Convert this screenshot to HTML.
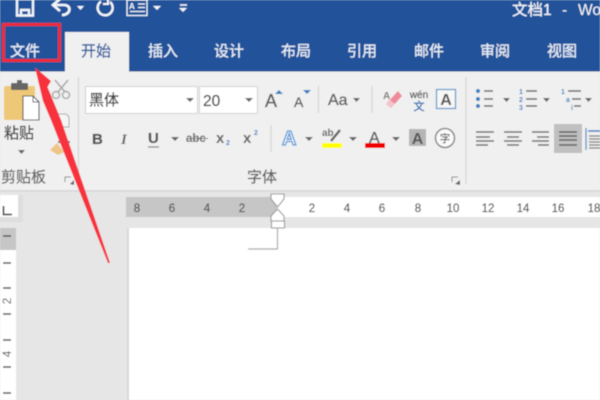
<!DOCTYPE html>
<html><head><meta charset="utf-8"><style>
html,body{margin:0;padding:0;width:600px;height:400px;overflow:hidden;background:#e6e6e6}
svg{display:block}
text{font-family:"Liberation Sans","Noto Sans CJK SC",sans-serif}
.tab{font-size:15px;fill:#e8eef7;stroke:#e8eef7;stroke-width:.25;text-anchor:middle}
.r{font-size:11.5px;fill:#555;stroke:#555;stroke-width:.2;text-anchor:middle}
.g{fill:#606060;stroke:#606060;stroke-width:.35}
.tri{fill:#666}
</style></head><body>
<svg width="600" height="400" viewBox="0 0 600 400" xmlns="http://www.w3.org/2000/svg">
<defs><filter id="b" x="-5%" y="-5%" width="110%" height="110%"><feGaussianBlur stdDeviation="0.45"/></filter></defs>
<g filter="url(#b)">
<rect width="600" height="400" fill="#e6e6e6"/>
<rect width="600" height="71.500" fill="#22539a"/>
<rect x="0" y="72" width="600" height="118" fill="#f0f0f0"/>
<rect x="0" y="190" width="600" height="2" fill="#d9d9d9"/>
<rect x="65" y="32" width="64" height="41" fill="#f0f0f0"/>

<!-- QAT -->
<g fill="none" stroke="#f2f5fa" stroke-width="2.400">
<path d="M17 -1H33V15.500H17Z"/><path d="M21 15V10H29V15"/>
<path d="M54 5H64C72 5 71 15 62 15" stroke-width="2.600"/>
<path d="M60 -1L53 5L60 11" stroke-width="2.600"/>
<path d="M101 1.500A7.500 7.500 0 1 0 110 2" stroke-width="2.400"/>
<path d="M108 -2V4H103" stroke-width="2"/>
<rect x="127" y="0" width="20" height="15.500" stroke-width="1.300"/>
<path d="M138 4H145M138 7.500H145M130 11.500H145" stroke-width="1.300"/>
<path d="M180 5H187" stroke-width="1.600"/>
</g>
<text x="129" y="9" font-size="8" font-weight="bold" fill="#f2f5fa">A</text>
<path d="M77 6H84L80.500 10ZM153 6H161L157 10ZM179 8H187L183 12Z" fill="#f2f5fa"/>
<text x="512" y="15" font-size="15.500" fill="#f2f5fa" stroke="#f2f5fa" stroke-width=".2">文档1</text>
<text x="562" y="15" font-size="15.500" fill="#f2f5fa">-</text>
<text x="578" y="15" font-size="15.500" fill="#f2f5fa">Wo</text>

<!-- tabs -->
<text class="tab" x="25" y="56">文件</text>
<text class="tab" x="96" y="56" style="fill:#2b5a9e;stroke:#2b5a9e">开始</text>
<text class="tab" x="163" y="56">插入</text>
<text class="tab" x="229" y="56">设计</text>
<text class="tab" x="296" y="56">布局</text>
<text class="tab" x="362" y="56">引用</text>
<text class="tab" x="429" y="56">邮件</text>
<text class="tab" x="495" y="56">审阅</text>
<text class="tab" x="562" y="56">视图</text>

<!-- separators -->
<path d="M78.500 77V184M466 77V184" stroke="#d4d4d4" stroke-width="1.200"/>
<path d="M271 125V152M318.500 86V113M372 86V113" stroke="#d4d4d4" stroke-width="1.200"/>

<!-- clipboard -->
<rect x="4" y="86" width="31" height="34" rx="2" fill="#efc877"/>
<rect x="11" y="83" width="17" height="7" rx="1" fill="#666"/>
<rect x="17" y="80" width="5" height="5" fill="#666"/>
<path d="M23 96H33L39 102V120H23Z" fill="#fff" stroke="#555" stroke-width="1.100"/>
<path d="M33 96V102H39" fill="none" stroke="#555"/>
<text x="4" y="138" font-size="15" fill="#444" stroke="#444" stroke-width=".25">粘贴</text>
<path d="M18 150H25L21.500 154Z" class="tri"/>
<text x="1" y="182" font-size="15" class="g" style="stroke-width:.2">剪贴板</text>
<path d="M65 182V177H71" fill="none" stroke="#888"/>
<path d="M70 184L74 180V185Z" fill="#666"/>
<!-- scissors -->
<path d="M55 80L65 92M68 80L58 92" stroke="#aaa" stroke-width="1.600" fill="none"/>
<circle cx="56" cy="95" r="3.500" fill="none" stroke="#aaa" stroke-width="1.500"/>
<circle cx="66" cy="95" r="3.500" fill="none" stroke="#aaa" stroke-width="1.500"/>
<path d="M58 114H66L69 117V127H58Z" fill="#f5f5f5" stroke="#aaa"/>
<path d="M50 150L57 143L64 152L58 155Z" fill="#eec585"/>
<path d="M58 141H70V143H58Z" fill="#777"/>

<!-- combos -->
<rect x="85.500" y="86.500" width="112" height="27" fill="#fff" stroke="#d2d2d2"/>
<text x="89" y="105" font-size="15" fill="#444" stroke="#444" stroke-width=".25">黑体</text>
<path d="M186 98H194L190 102Z" class="tri"/>
<rect x="199.500" y="86.500" width="58" height="27" fill="#fff" stroke="#d2d2d2"/>
<text x="203" y="106" font-size="15.500" fill="#444" stroke="#444" stroke-width=".2">20</text>
<path d="M245 98H253L249 102Z" class="tri"/>

<!-- row 1 -->
<text x="265" y="107" font-size="18" class="g">A</text>
<path d="M275 94L279 90L283 94Z" fill="#3d7fc1"/>
<text x="294" y="107" font-size="14" class="g">A</text>
<path d="M303 90H311L307 94Z" fill="#3d7fc1"/>
<text x="328" y="105" font-size="16" class="g">Aa</text>
<path d="M353 98H360L356.500 102Z" class="tri"/>
<text x="383" y="99" font-size="10" font-weight="bold" fill="#777">A</text>
<path d="M386 104L398 91L402 96L391 108Z" fill="#ee8a99"/>
<path d="M386 104L390 100L395 104L391 108Z" fill="#f5c3cb"/>
<text x="419" y="98" font-size="10" fill="#555" stroke="#555" stroke-width=".25" text-anchor="middle">wén</text>
<text x="419" y="110" font-size="11" fill="#2b72b5" stroke="#2b72b5" stroke-width=".4" text-anchor="middle">文</text>
<rect x="436.500" y="89.500" width="19" height="19" fill="#f7f7f7" stroke="#6a9ccb" stroke-width="1.300"/>
<text x="446" y="105" font-size="16" font-weight="bold" fill="#555" text-anchor="middle">A</text>

<!-- lists -->
<g fill="#3d7fc1"><circle cx="478" cy="91" r="2"/><circle cx="478" cy="99" r="2"/><circle cx="478" cy="106" r="2"/></g>
<path d="M484 91H493M484 99H493M484 106H493M526 91H537M526 99H537M526 106H537M568 91H581M572 99H581M574 106H581" stroke="#666" stroke-width="1.400"/>
<path d="M503 98H510L506.500 102ZM543 98H550L546.500 102ZM585 98H592L588.500 102Z" class="tri"/>
<g font-size="7" font-weight="bold" fill="#3d7fc1" text-anchor="middle">
<text x="521" y="94">1</text><text x="521" y="102">2</text><text x="521" y="110">3</text>
<text x="563" y="94">1</text><text x="568" y="102">a</text><text x="572" y="110">i</text>
</g>

<!-- row 2 -->
<text x="92" y="144" font-size="15" font-weight="bold" fill="#555" stroke="#555" stroke-width=".3">B</text>
<text x="121" y="144" font-size="15" font-weight="bold" font-style="italic" style="font-family:'Liberation Serif',serif" fill="#666">I</text>
<text x="148" y="143" font-size="15" font-weight="bold" fill="#555" stroke="#555" stroke-width=".2">U</text>
<path d="M148 147H159" stroke="#888" stroke-width="1.300"/>
<path d="M171 137H179L175 141Z" class="tri"/>
<text x="186" y="142" font-size="11.500" font-weight="bold" fill="#666">abc</text>
<path d="M186 138.500H208" stroke="#777" stroke-width="1"/>
<text x="216" y="143" font-size="15" font-weight="bold" fill="#666">x</text>
<text x="226" y="145" font-size="7" font-weight="bold" fill="#3d7fc1">2</text>
<text x="243" y="143" font-size="15" font-weight="bold" fill="#666">x</text>
<text x="254" y="135" font-size="7" font-weight="bold" fill="#3d7fc1">2</text>
<text x="282" y="145" font-size="20" fill="#f0f6fc" stroke="#5b9bd5" stroke-width="1.300" font-weight="bold">A</text>
<path d="M305 137H313L309 141Z" class="tri"/>
<text x="322" y="136" font-size="10" font-weight="bold" fill="#666">ab</text>
<path d="M331 141L340 130" stroke="#666" stroke-width="2.500"/>
<rect x="322" y="143" width="20" height="5" fill="#ffff00"/>
<path d="M349 137H357L353 141Z" class="tri"/>
<text x="369" y="143" font-size="16" class="g">A</text>
<rect x="365" y="143" width="20" height="5" fill="#f00000"/>
<path d="M392 137H400L396 141Z" class="tri"/>
<rect x="409" y="129" width="17" height="17" fill="#b5b5b5"/>
<text x="417.500" y="144" font-size="16" font-weight="bold" fill="#555" text-anchor="middle">A</text>
<circle cx="445" cy="138" r="9.500" fill="#fafafa" stroke="#888" stroke-width="1.500"/>
<text x="445" y="142" font-size="10.500" fill="#555" stroke="#555" stroke-width=".2" text-anchor="middle">字</text>
<text x="247" y="182" font-size="15" class="g" style="stroke-width:.2">字体</text>
<path d="M452 182V177H458" fill="none" stroke="#888"/>
<path d="M455 184L460 180V185Z" fill="#666"/>

<!-- align -->
<rect x="554" y="124" width="28" height="29" fill="#c0c0c0"/>
<path d="M476 132H494M476 137H490M476 141H494M476 145H488M504 132H522M507 137H519M504 141H522M507 145H519M532 132H549M537 137H549M532 141H549M538 145H549" stroke="#707070" stroke-width="1.500"/>
<path d="M559 132H577M559 136H577M559 140H577M559 145H577" stroke="#606060" stroke-width="1.500"/>
<path d="M586 128V150" stroke="#3d7fc1" stroke-width="1.200"/>
<path d="M588 131H600" stroke="#3d7fc1" stroke-width="1.500"/>
<path d="M589 136H600M589 139H600M589 142H600M589 145H600M589 148H600" stroke="#777" stroke-width="1.200"/>

<!-- top ruler -->
<rect x="126" y="197" width="151" height="20" fill="#c6c6c6"/>
<rect x="277" y="197" width="323" height="20" fill="#fff"/>
<rect x="129" y="228" width="471" height="172" fill="#fff"/>
<rect x="127" y="228" width="2" height="172" fill="#d8d8d8"/>
<text class="r" x="137" y="212">8</text><text class="r" x="172" y="212">6</text><text class="r" x="207" y="212">4</text><text class="r" x="242" y="212">2</text>
<text class="r" x="312" y="212">2</text><text class="r" x="347" y="212">4</text><text class="r" x="382" y="212">6</text><text class="r" x="418" y="212">8</text>
<text class="r" x="453" y="212">10</text><text class="r" x="488" y="212">12</text><text class="r" x="523" y="212">14</text><text class="r" x="558" y="212">16</text><text class="r" x="594" y="212">18</text>
<path d="M271 194H284V199L277.500 207L271 199Z" fill="#fff" stroke="#999" stroke-width="1.100"/>
<path d="M277.500 209L284 216V221H271V216Z" fill="#fff" stroke="#999" stroke-width="1.100"/>
<rect x="271.500" y="221" width="13" height="7" fill="#fff" stroke="#999" stroke-width="1.100"/>
<path d="M277.500 228V249H248" fill="none" stroke="#aaa" stroke-width="1.200"/>

<!-- left ruler -->
<rect x="0" y="195" width="23" height="27" fill="#dedede"/>
<rect x="0" y="195" width="18" height="22" fill="#fff"/>
<path d="M3.500 206V214.500H12" fill="none" stroke="#555" stroke-width="1.800"/>
<rect x="0" y="228" width="16" height="22" fill="#c6c6c6"/>
<rect x="0" y="250" width="16" height="150" fill="#fff"/>
<path d="M3 236H11M3 263H11M3 288H11M3 314H11M3 340H11M3 367H11M3 393H11" stroke="#555" stroke-width="1.500"/>
<text transform="translate(11,301) rotate(-90)" font-size="11.500" fill="#555" text-anchor="middle">2</text>
<text transform="translate(11,354) rotate(-90)" font-size="11.500" fill="#555" text-anchor="middle">4</text>

<!-- red box and arrow -->
<rect x="3.500" y="24.500" width="56" height="36" fill="none" stroke="#f02a35" stroke-width="3"/>
<path d="M35 67.500L51 81L47.500 87L61 120L110 263L108 263L51 120L43 101Z" fill="#f8303c"/>
</g>
</svg>
</body></html>
